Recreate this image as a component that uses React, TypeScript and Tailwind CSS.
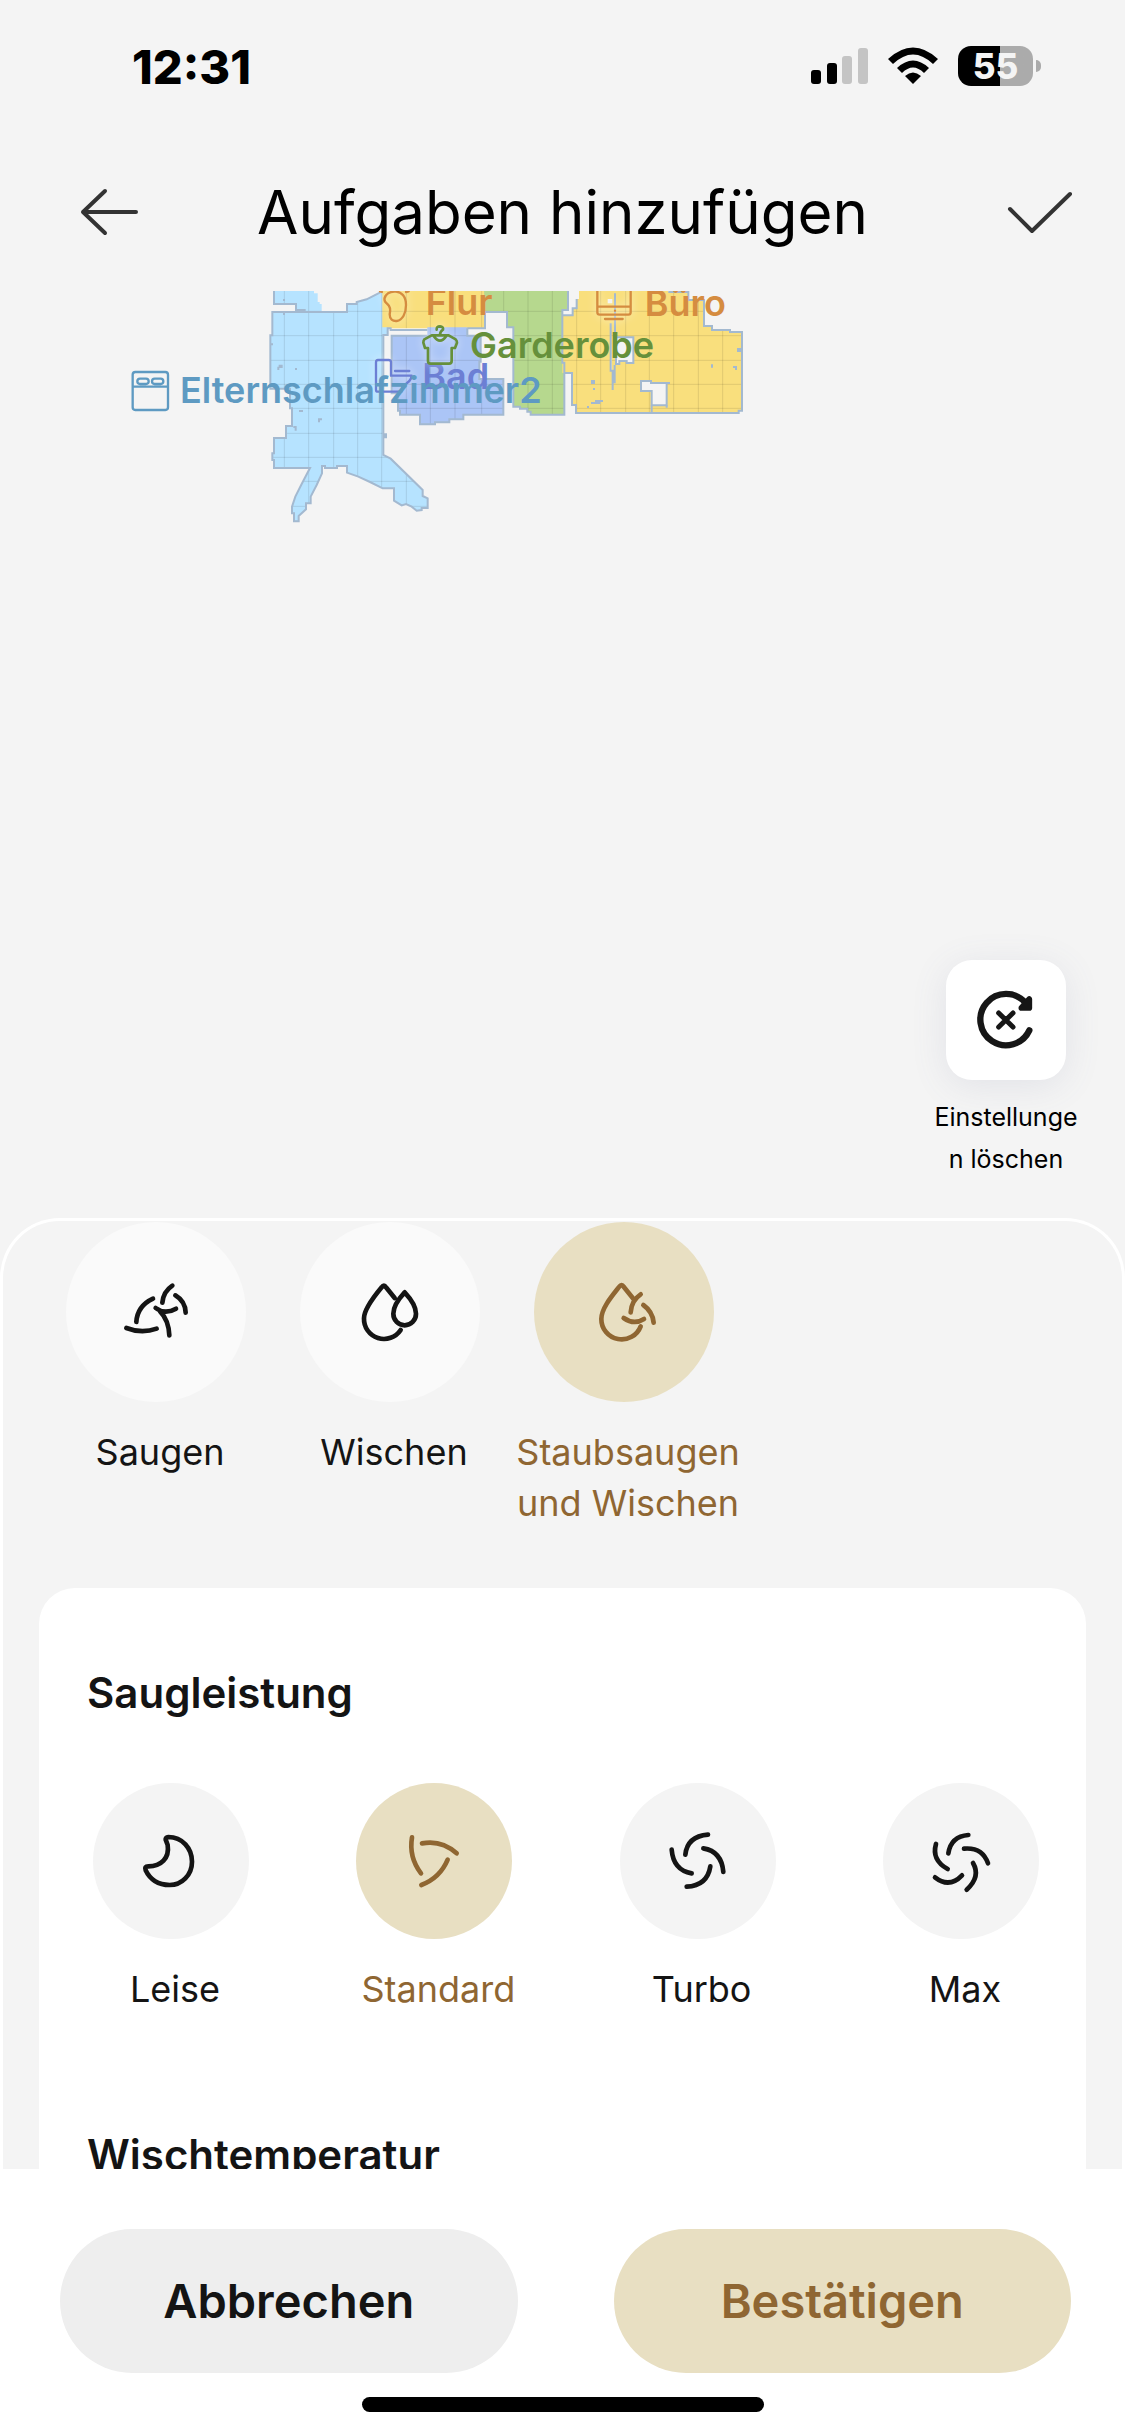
import { useState, type ReactNode } from "react";
import clsx from "clsx";

const strokeProps = {
  fill: "none",
  stroke: "currentColor",
  strokeWidth: 14,
  strokeLinecap: "round",
  strokeLinejoin: "round",
} as const;

const modes = [
  {
    label: "Saugen",
    viewBox: "198 66 540 540",
    d: "M517 257Q490 275 487 308M526 286Q556 304 557 338M467 324Q495 345 528 326M459 296Q412 318 409 366M379 384Q425 402 470 386M480 334Q506 360 508 406",
  },
  {
    label: "Wischen",
    viewBox: "60 66 540 540",
    d: "M344 294L318 262Q312 252 305 262C280 292 252 328 252 355A60 60 0 0 0 362 390M374 277C360 292 340 315 340 341A34 35 0 0 0 408 341C408 315 388 292 374 277Z",
  },
  {
    label: "Staubsaugen und Wischen",
    viewBox: "762 66 540 540",
    d: "M1060 296L1031 260Q1025 250 1018 260C996 288 964 325 964 357A61 61 0 0 0 1082 379M1082 283Q1054 302 1052 337M1031 354Q1062 376 1092 357M1090 315Q1118 335 1121 368",
  },
];

const levels = [
  {
    label: "Leise",
    d: "M226 162C268 162 297 196 297 236C297 276 266 306 230 306C195 306 170 288 158 262Q153 250 166 250C204 250 230 226 224 186L218 170Q217 163 226 162Z",
  },
  {
    label: "Standard",
    d: "M168 163Q158 222 195 271M198 181Q257 170 302 211M275 230Q252 285 196 306",
  },
  {
    label: "Turbo",
    d: "M264 155Q202 160 196 215M250 196Q305 205 310 267M271 250Q262 308 200 311M155 200Q160 262 215 271",
  },
  {
    label: "Max",
    d: "M256 156Q204 160 196 211M243 197Q298 192 315 241M270 240Q294 281 251 320M237 277Q199 317 156 283M159 183Q145 231 194 258",
  },
];

const bedroom =
  "M-263 96H-39V72H-10V66L20 58L61 37H67V142H83V165H70V525L92 536L188 630V648L203 655V684H185V690L170 692L155 680L138 672L125 676L102 662V625H68L30 606L-5 590L-39 578V558H-69V564H-105V558H-114V580L-130 615L-148 650V670H-162V688L-184 708V724H-198V700H-204V680L-194 650L-175 612L-150 564H-258V540H-263V520H-258V474H-222V438H-204V385H-210V326H-269V166H-263Z";
const bedroomTop = "M-260 30H-138V40H-127V66H-121V72H-115V96H-166V90H-192V72H-260Z";
const hall = "M65 30H375V145H84V147H65Z";
const wardrobe =
  "M372 30H624V90H607V248H613V404H512V395H502V386H480V380H460V142H441V96H375Z";
const bath =
  "M95 167H202V142H322V167H362V245H358V297H430V404H310V418H268V427H225V433H180V404H120V392H114V340H95Z";
const office =
  "M657 30H925V36H985V60H1032V138H1056V150H1110V156H1146V392H1136V399H648V375H636V279H607V106H638V85H650V57H657Z";

const gridX = [-227, -154, -79, -7, 65, 139, 211, 285, 365, 431, 504, 577, 650, 722, 797, 868, 941, 1015, 1088];
const gridY = [94, 167, 241, 313, 385, 460, 532, 604, 679];

function FloorMap() {
  return (
    <svg viewBox="0 0 3375 720" className="block w-full" role="img" aria-label="Karte">
      <defs>
        <clipPath id="rooms">
          {[bedroom, bedroomTop, hall, wardrobe, bath, office].map((d) => (
            <path key={d} d={d} />
          ))}
        </clipPath>
      </defs>
      <g transform="translate(1080 -33)" fill="none" strokeWidth={6}>
        <path d={bedroomTop} fill="#b6e3ff" />
        <path d={hall} fill="#f9df7d" />
        <path d={bedroom} fill="#b6e3ff" />
        <path d={wardrobe} fill="#b6d88e" />
        <path d={bath} fill="#abc5f6" />
        <path d={office} fill="#f9df7d" />
        <g clipPath="url(#rooms)" stroke="#000" strokeOpacity={0.1} strokeWidth={3}>
          {gridX.map((x) => (
            <path key={x} d={`M${x} 30V730`} />
          ))}
          {gridY.map((y) => (
            <path key={y} d={`M-280 ${y}H1160`} />
          ))}
        </g>

        {/* walls */}
        <g stroke="#a3b9d0">
          <path d="M-258 33V72H-192V90H-166V96" />
          <path d="M61 37L20 58L-10 66V72H-39V96H-263V166H-269V326H-210V385H-204V438H-222V474H-258V520H-263V540H-258V564H-150L-175 612L-194 650L-204 680V700H-198V724H-184V708L-162 688V670H-148V650L-130 615L-114 580V558H-105V564H-69V558H-39V578L-5 590L30 606L68 625H102V662L125 676L138 672L155 680L170 692L185 690V684H203V655L188 648V630L92 536L70 525V165H83V145H92V150H202" />
          <path d="M322 145H375V96H441V142H460V380H480V386H502V395H512V404H613V248H607V90H624V33" />
          <path d="M202 167H95V340H114V392H120V404H180V433H225V427H268V418H310V404H430V297H358V245H362V167H322V145" />
          <path d="M607 106H638V85H650V57M613 279H636V375H648V399H1136V392H1146V156H1110V150H1056V138H1032V60H985V36H925" />
        </g>

        {/* furniture */}
        <g fill="#f4f4f4" stroke="#a3b9d0">
          <path d="M768 172H820V249H800V243H778V252H768Z" />
          <path d="M843 303H873V309H920V376H875V333H843Z" />
          <path d="M875 376V396M920 309H930M920 376V383M765 40V160M752 130V272H758V330M764 255V310" />
          <path d="M743 57H757V70H743Z" stroke="none" />
        </g>
        <g fill="#a3b9d0">
          <path d="M1131 204h14v12h-14zM1053 253h6v10h-6zM1119 258h12v12h-6v-6h-6zM693 300h12v12h-12zM699 324h6v6h-6zM681 378h6v6h-6zM693 366h12v-6h24v6h-8v6h-28z" />
          <path d="M-231 57h6v6h-6zM-231 99h6v6h-6zM-269 190h8v6h-8zM-248 270v-10h4v-6h12v10h-10v6zM-195 264h6v6h-6zM-183 390h12v6h-12zM-126 415h12v6h-6v6h-6zM-200 438h10v14h-6v-8h-4zM70 460h11v15h-11z" />
        </g>

        {/* room icons */}
        <g strokeWidth={7} strokeLinecap="round" strokeLinejoin="round" className="drop-shadow-[0_0_12px_rgba(255,255,255,0.6)]">
          <g stroke="#d58c40">
            <path d="M84 40C70 50 70 64 82 72C92 80 92 90 89 103C89 118 98 124 110 123C128 120 138 100 138 75C138 50 125 36 108 35C97 34 90 36 84 40ZM60 34L66 36M138 36L146 34" />
            <path d="M712 30V97Q712 104 719 104H805Q812 104 812 97V30M712 80H812M765 92V92M735 117H788" />
          </g>
          <path stroke="#6c7fd4" d="M54 240H86Q93 240 93 247V287H155Q154 305 128 317L124 335H54Q48 335 48 329V247Q48 240 54 240ZM105 273H148" />
        </g>
        <path d="M-674 276h90q8 0 8 8v98q0 8-8 8h-90q-8 0-8-8v-98q0-8 8-8zM-680 320h102M-660 296h18q8 0 8 8t-8 8h-18q-8 0-8-8t8-8zM-616 296h18q8 0 8 8t-8 8h-18q-8 0-8-8t8-8z" stroke="#5e9ac2" strokeWidth={7} />
      </g>
      <g className="font-semibold" fontSize={108}>
        <text x={1277} y={71} fill="#d58c40">Flur</text>
        <text x={1934} y={74} fill="#d58c40">Büro</text>
        <text x={1267} y={293} fill="#6c7fd4">Bad</text>
        <text x={1410} y={201} fill="#66903b">Garderobe</text>
        <text x={540} y={335} fill="#5e9ac2">Elternschlafzimmer2</text>
      </g>
      <g transform="translate(1080 -33)" fill="none" stroke="#66903b" strokeWidth={8} strokeLinecap="round" strokeLinejoin="round" className="drop-shadow-[0_0_12px_rgba(255,255,255,0.6)]">
        <path d="M230 149Q229 139 240 139Q251 140 249 149Q240 154 240 165M215 166L193 178Q190 182 190 188L195 204H204V243Q204 251 212 251H267Q275 251 275 243V204H285L291 188Q291 182 287 178L266 166ZM221 168Q240 196 259 168" />
      </g>
    </svg>
  );
}

function StatusBar() {
  return (
    <div className="flex h-[132px] shrink-0 items-center justify-between pr-[84px] pl-[132px]">
      <span className="text-[47px] leading-none font-extrabold">12:31</span>
      <div className="flex items-center gap-5">
        <svg width="57" height="38" viewBox="0 0 57 38" aria-hidden="true">
          <rect x="0" y="23" width="10" height="14" rx="3" />
          <rect x="16" y="16" width="10" height="21" rx="3" />
          <rect x="31" y="9" width="10" height="28" rx="3" fill="#c4c4c4" />
          <rect x="47" y="1" width="10" height="36" rx="3" fill="#c4c4c4" />
        </svg>
        <svg width="50" height="38" viewBox="0 0 50 38" aria-hidden="true">
          <path d="M0 12Q25 -11 50 12L45 17Q25 -2 5 17ZM9 21Q25 6 41 21L36 26Q25 15 14 26ZM17 29Q25 22 33 29L25 37Z" />
        </svg>
        <div className="flex items-center gap-[3px]">
          <div className="flex h-10 w-[75px] items-center justify-center rounded-[13px] bg-linear-to-r from-black from-56% to-[#ababab] to-56% text-[35px] leading-none font-extrabold text-[#f4f4f4]">
            55
          </div>
          <div className="h-3 w-[5px] rounded-r-full bg-[#ababab]" />
        </div>
      </div>
    </div>
  );
}

type OptionProps = {
  label: string;
  active: boolean;
  onClick: () => void;
  className: string;
  idleClassName: string;
  children: ReactNode;
};

function Option({ label, active, onClick, className, idleClassName, children }: OptionProps) {
  return (
    <button
      type="button"
      aria-pressed={active}
      onClick={onClick}
      className={clsx("flex flex-col items-center", active ? "text-[#8f6632]" : "text-[#141414]", className)}
    >
      <span className={clsx("rounded-full", active ? "bg-[#e8dfc2]" : idleClassName)}>{children}</span>
      <span className="mt-[25px] pl-2 text-[36px] leading-[51px]">{label}</span>
    </button>
  );
}

export default function App() {
  const [mode, setMode] = useState(2);
  const [level, setLevel] = useState(1);

  return (
    <div className="flex h-screen flex-col bg-[#f4f4f4] font-['Inter',sans-serif] text-black">
      <StatusBar />

      <header className="flex h-[159px] shrink-0 items-center justify-between pr-[52px] pl-[78px]">
        <button type="button" aria-label="Zurück">
          <svg width="62" height="50" viewBox="0 0 62 50" fill="none" stroke="#333" strokeWidth="4" strokeLinecap="round" strokeLinejoin="round">
            <path d="M27 4L5 25L27 46M5 25H58" />
          </svg>
        </button>
        <h1 className="text-[60px] leading-none">Aufgaben hinzufügen</h1>
        <button type="button" aria-label="Fertig" className="pl-5">
          <svg width="68" height="50" viewBox="0 0 68 50" fill="none" stroke="#333" strokeWidth="4" strokeLinecap="round" strokeLinejoin="round">
            <path d="M5 22L27 44L65 7" />
          </svg>
        </button>
      </header>

      <section className="flex h-[927px] shrink-0 flex-col justify-between">
        <FloorMap />
        <button type="button" className="mr-[45px] mb-[38px] flex w-[148px] flex-col items-center self-end">
          <span className="w-[120px] rounded-[26px] bg-white shadow-[0_6px_36px_rgba(100,110,150,0.12)]">
            <svg viewBox="141 60 360 360" fill="none" stroke="#161616" strokeLinecap="round" strokeLinejoin="round" aria-hidden="true">
              <path strokeWidth="19" d="M391 271A77 77 0 1 1 379 188" />
              <path strokeWidth="17" fill="#161616" d="M391 177V204H367Z" />
              <path strokeWidth="15" d="M299 219L342 261M342 219L299 261" />
            </svg>
          </span>
          <span className="mt-4 w-full text-[25px] leading-[42px] break-all">Einstellungen löschen</span>
        </button>
      </section>

      <main className="min-h-0 flex-1 overflow-hidden rounded-t-[60px] border-x-3 border-t-3 border-white">
        <div className="flex items-start px-9 pt-px">
          {modes.map((m, i) => (
            <Option
              key={m.label}
              label={m.label}
              active={mode === i}
              onClick={() => setMode(i)}
              className="w-[234px]"
              idleClassName="bg-[#fafafa]"
            >
              <svg viewBox={m.viewBox} className="w-[180px]" {...strokeProps}>
                <path d={m.d} />
              </svg>
            </Option>
          ))}
        </div>

        <div className="mx-9 mt-[59px] rounded-t-[36px] bg-white pt-[75px]">
          <h2 className="px-12 text-[42px] leading-[60px] font-semibold text-[#141414]">Saugleistung</h2>
          <div className="mt-[60px] flex items-start justify-between pr-[47px] pl-[54px]">
            {levels.map((l, i) => (
              <Option
                key={l.label}
                label={l.label}
                active={level === i}
                onClick={() => setLevel(i)}
                className="w-[156px]"
                idleClassName="bg-[#f4f4f4]"
              >
                <svg viewBox="0 0 468 468" className="w-[156px]" {...strokeProps}>
                  <path d={l.d} />
                </svg>
              </Option>
            ))}
          </div>
          <h2 className="mt-[110px] px-12 text-[42px] leading-[60px] font-semibold text-[#141414]">Wischtemperatur</h2>
        </div>
      </main>

      <footer className="shrink-0 bg-white pt-[60px] pb-6">
        <div className="flex gap-24 pr-[54px] pl-[60px]">
          <button type="button" className="h-36 flex-1 rounded-full bg-[#eee] text-[47px] font-semibold text-[#141414]">
            Abbrechen
          </button>
          <button type="button" className="h-36 flex-1 rounded-full bg-[#e8dfc2] text-[47px] font-semibold text-[#8f6632]">
            Bestätigen
          </button>
        </div>
        <div className="mx-auto mt-6 h-[15px] w-[402px] rounded-full bg-black" />
      </footer>
    </div>
  );
}
